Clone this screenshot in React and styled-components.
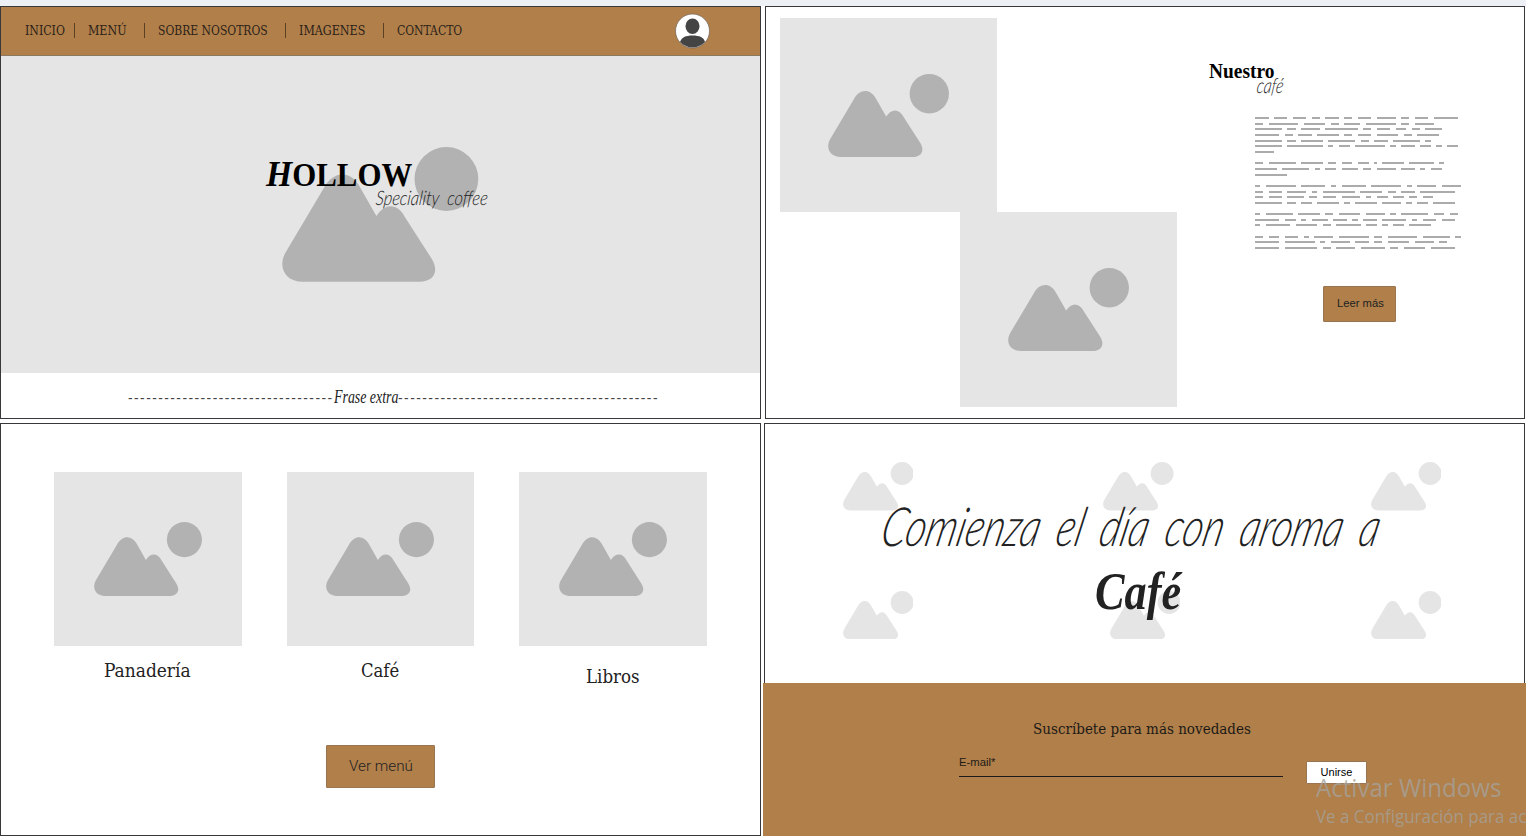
import React, { useLayoutEffect, useRef } from "react";
import styled, { createGlobalStyle } from "styled-components";

const BROWN = "#b07f4a";
const SLAB = '"DejaVu Serif Condensed", "DejaVu Serif", serif';
const SERIF = '"Liberation Serif", serif';
const SANS = '"Liberation Sans", sans-serif';
const HAND = 'Lato, sans-serif';

const GlobalStyle = createGlobalStyle`
  * { box-sizing: border-box; }
  body { margin: 0; background: #fff; overflow: hidden; }
  h1, h2, p { margin: 0; font-weight: inherit; }
`;

const Board = styled.main`
  width: 1526px;
  height: 837px;
  overflow: hidden;
  position: relative;
  display: flex;
  flex-direction: column;
  gap: 4px;
  border-top: 6px solid #edf1f6;
`;
const BoardRow = styled.div`
  display: flex;
  gap: ${(p) => p.$gap}px;
  height: 413px;
`;
const Frame = styled.section`
  position: relative;
  flex: none;
  width: ${(p) => p.$w || 761}px;
  height: 413px;
  border: 1px solid #38383a;
  background: #fff;
  display: flex;
  flex-direction: column;
`;

/* A single line of text condensed or widened to a set measure. */
const Measure = styled.span`
  display: block;
  flex: none;
  width: ${(p) => p.$w}px;
  height: ${(p) => p.$lh}px;
  line-height: ${(p) => p.$lh}px;
  white-space: nowrap;
`;
const Glyphs = styled.span`
  display: inline-block;
  transform-origin: 0 50%;
`;
function Fit({ w, lh, slant = 0, children }) {
  const ref = useRef(null);
  useLayoutEffect(() => {
    const el = ref.current;
    el.style.transform = `skewX(${-slant}deg) scaleX(${w / el.offsetWidth})`;
  }, [w, slant, children]);
  return (
    <Measure $w={w} $lh={lh}>
      <Glyphs ref={ref}>{children}</Glyphs>
    </Measure>
  );
}

const PictureSvg = styled.svg`
  display: block;
  flex: none;
  width: ${(p) => p.$w}px;
  height: ${(p) => p.$w * 0.6875}px;
  fill: ${(p) => p.$fill || "#b2b2b2"};
  margin-left: ${(p) => p.$ml || 0}px;
`;
const Picture = ({ w, fill, ml }) => (
  <PictureSvg $w={w} $fill={fill} $ml={ml} viewBox="0 0 196.4 135">
    <path d="M3.4 105.7 L41.7 41.3 C51 23.2 69 23.2 77.7 39.7 L94.4 69 C103 55.5 116 56 122.7 69.7 L149.4 111.3 C158 125 151 134.7 137.7 134.7 H21 C2 134.7 -4 119 3.4 105.7 Z" />
    <circle cx="164.4" cy="32" r="31.9" />
  </PictureSvg>
);

/* Header and hero */
const NavBar = styled.nav`
  height: 49px;
  flex: none;
  display: flex;
  align-items: center;
  padding-left: 24px;
  background: ${BROWN};
  border-bottom: 1px solid #8d7860;
  font: 12px ${SLAB};
  color: #2b2118;
`;
const Divider = styled.i`
  width: 1px;
  height: 15px;
  background: #5c4023;
  margin: 0 13px 2px ${(p) => p.$ml}px;
`;
const Avatar = styled.svg`
  width: 36px;
  height: 36px;
  margin: 0 0 1px 212.5px;
`;
const Hero = styled.div`
  position: relative;
  height: 317px;
  flex: none;
  background: #e5e5e5;
  padding: 91px 0 0 281.3px;
`;
const Brand = styled.div`
  position: absolute;
  left: 265px;
  top: 97px;
  color: #000;
`;
const BrandName = styled.h1`
  font: bold 33px ${SERIF};
`;
const Initial = styled.span`
  font-size: 36px;
  font-style: italic;
`;
const BrandTag = styled.p`
  margin: -10px 0 0 110px;
  font: italic 300 20px ${HAND};
  word-spacing: 5px;
  color: #222;
`;
const Phrase = styled.div`
  display: flex;
  padding: 12px 0 0 127px;
  color: #444;
`;
const Dashes = styled.span`
  padding-top: 1px;
  font: 14px ${SANS};
  letter-spacing: 1.5px;
`;
const PhraseText = styled.em`
  font: italic 18px ${SERIF};
  color: #222;
`;

/* About */
const AboutFrame = styled(Frame)`
  flex-direction: row;
`;
const Gallery = styled.div`
  width: 397px;
  flex: none;
  padding: 11px 0 0 14px;
`;
const Tile = styled.div`
  width: ${(p) => p.$w}px;
  height: ${(p) => p.$h}px;
  margin-left: ${(p) => p.$ml || 0}px;
  padding: ${(p) => p.$pad};
  background: #e5e5e5;
`;
const About = styled.div`
  padding: 51px 0 0 46px;
`;
const AboutTitle = styled.h2`
  font: bold 20px ${SERIF};
  color: #000;
`;
const AboutSub = styled.p`
  margin: -11px 0 0 48px;
  font: italic 300 21px ${HAND};
  color: #222;
`;
const Copy = styled.div`
  margin: 20px 0 0 46px;
`;
const CopyLine = styled.div`
  height: 5.66px;
  display: flex;
  gap: 5.41px;
`;
const Word = styled.i`
  width: ${(p) => p.$n * 2.707}px;
  height: 2px;
  background: #ababab;
`;
const Button = styled.button`
  display: flex;
  align-items: flex-start;
  justify-content: center;
  padding: ${(p) => p.$pt}px 0 0;
  width: ${(p) => p.$w}px;
  height: ${(p) => p.$h}px;
  margin: ${(p) => p.$m || 0};
  background: ${(p) => p.$bg || BROWN};
  border: 1px solid #987450;
  border-radius: 1px;
  color: ${(p) => p.$color || "#222"};
  font: ${(p) => p.$font};
`;

const copy = [
  [5, 5, 5, 3, 5, 3, 5, 7, 3, 5, 9],
  [3, 11, 8, 3, 6, 11, 3, 7],
  [10, 3, 7, 12, 3, 5, 4, 3, 6],
  [9, 3, 5, 8, 3, 5, 8, 3, 8],
  [10, 3, 8, 10, 3, 5, 10, 2],
  [10, 13, 2, 4, 11, 2, 5, 4, 2, 4],
  [7],
  [],
  [3, 10, 8, 3, 4, 4, 1, 8, 9, 2],
  [8, 10, 2, 4, 6, 3, 7, 5, 2, 4],
  [12],
  [],
  [2, 11, 9, 2, 9, 11, 2, 7, 7],
  [3, 5, 7, 2, 12, 8, 3, 5, 13],
  [3, 5, 6, 3, 5, 7, 2, 4, 4, 3, 4],
  [10, 3, 4, 8, 2, 8, 7, 2, 4, 8],
  [],
  [2, 10, 8, 3, 8, 7, 2, 10, 4, 3],
  [9, 4, 2, 6, 5, 2, 5, 9, 2, 5, 5],
  [2, 9, 8, 3, 9, 4, 2, 4, 8],
  [],
  [3, 4, 5, 2, 7, 11, 3, 11, 10, 2],
  [9, 11, 2, 7, 5, 3, 8, 7, 3],
  [9, 12, 3, 7, 9, 3, 8, 9],
];

/* Menu categories */
const Cards = styled.div`
  display: flex;
  gap: 45px;
  padding: 48px 0 0 53px;
  height: 272px;
`;
const Card = styled.article`
  width: 187.5px;
`;
const CardLabel = styled.p`
  margin: ${(p) => p.$mt}px 0 0 ${(p) => p.$ml}px;
  font: 18.5px ${SLAB};
  color: #222;
`;

/* Call to action and sign-up */
const Pattern = styled.div`
  height: 259px;
  flex: none;
  padding: 38px 0 0 77.6px;
  display: flex;
  flex-direction: column;
  gap: 80px;
`;
const PatternRow = styled.div`
  display: flex;
`;
const Slogan = styled.div`
  position: absolute;
  left: 118px;
  top: 67px;
  color: #222;
`;
const SloganLine = styled.h2`
  font: italic 300 54px ${HAND};
  word-spacing: 9px;
`;
const SloganWord = styled.p`
  margin: -2px 0 0 212px;
  font: italic bold 53px ${SERIF};
`;
const SignUp = styled.footer`
  width: 763px;
  height: 153px;
  flex: none;
  margin-left: -2px;
  padding: 36px 0 0 196px;
  background: ${BROWN};
  color: #1d1a16;
`;
const SignUpTitle = styled.p`
  margin-left: 74px;
  font: 14.5px ${SLAB};
`;
const SignUpRow = styled.div`
  display: flex;
  align-items: flex-start;
  gap: 23px;
  margin-top: 14px;
`;
const Field = styled.label`
  width: 324px;
  height: 24px;
  border-bottom: 1px solid #1b1b1b;
  padding-top: 2px;
  font: 11px ${SANS};
`;
const Watermark = styled.div`
  position: absolute;
  left: 1316px;
  top: 765px;
  color: rgba(166, 162, 155, 0.78);
  font: 25px "Open Sans", sans-serif;
`;
const WatermarkNote = styled.p`
  font-size: 17.5px;
`;

export default function App() {
  return (
    <>
      <GlobalStyle />
      <Board>
        <BoardRow $gap={4}>
          <Frame>
            <NavBar>
              <Fit w={39.5} lh={16}>INICIO</Fit>
              <Divider $ml={9.5} />
              <Fit w={38} lh={16}>MENÚ</Fit>
              <Divider $ml={18} />
              <Fit w={110} lh={16}>SOBRE NOSOTROS</Fit>
              <Divider $ml={17} />
              <Fit w={66} lh={16}>IMAGENES</Fit>
              <Divider $ml={18} />
              <Fit w={65} lh={16}>CONTACTO</Fit>
              <Avatar viewBox="0 0 36 36">
                <circle cx="17.5" cy="18" r="17" fill="#fff" stroke="#6d6257" strokeWidth=".7" />
                <ellipse cx="17.5" cy="13.3" rx="7" ry="7.7" fill="#444" />
                <path d="M5 29 C6.5 24.5 10.5 22.5 17.5 22.5 S29 24.5 30 29 C22.5 36.3 12.5 36.3 5 29Z" fill="#444" />
              </Avatar>
            </NavBar>
            <Hero>
              <Picture w={196.4} />
              <Brand>
                <BrandName><Fit w={146} lh={42}><Initial>H</Initial>OLLOW</Fit></BrandName>
                <BrandTag><Fit w={112} lh={24} slant={6}>Speciality coffee</Fit></BrandTag>
              </Brand>
            </Hero>
            <Phrase>
              <Dashes><Fit w={206} lh={24}>{"-".repeat(34)}</Fit></Dashes>
              <PhraseText><Fit w={64} lh={24}>Frase extra</Fit></PhraseText>
              <Dashes><Fit w={261} lh={24}>{"-".repeat(43)}</Fit></Dashes>
            </Phrase>
          </Frame>

          <AboutFrame $w={760}>
            <Gallery>
              <Tile $w={217} $h={194} $pad="56px 0 0 48px"><Picture w={121} /></Tile>
              <Tile $w={217} $h={195} $ml={180} $pad="56px 0 0 48px"><Picture w={121} /></Tile>
            </Gallery>
            <About>
              <AboutTitle><Fit w={65} lh={26}>Nuestro</Fit></AboutTitle>
              <AboutSub><Fit w={27} lh={24} slant={8}>café</Fit></AboutSub>
              <Copy>
                {copy.map((line, i) => (
                  <CopyLine key={i}>
                    {line.map((n, j) => <Word key={j} $n={n} />)}
                  </CopyLine>
                ))}
              </Copy>
              <Button $w={73} $h={36} $pt={9} $m="33px 0 0 114px" $font={`11px ${SANS}`}>
                <Fit w={47} lh={14}>Leer más</Fit>
              </Button>
            </About>
          </AboutFrame>
        </BoardRow>

        <BoardRow $gap={3}>
          <Frame>
            <Cards>
              <Card>
                <Tile $w={187.5} $h={174} $pad="50px 0 0 40px"><Picture w={108} /></Tile>
                <CardLabel $mt={12} $ml={50}><Fit w={87} lh={26}>Panadería</Fit></CardLabel>
              </Card>
              <Card>
                <Tile $w={187.5} $h={174} $pad="50px 0 0 39.5px"><Picture w={108} /></Tile>
                <CardLabel $mt={12} $ml={74}><Fit w={38.5} lh={26}>Café</Fit></CardLabel>
              </Card>
              <Card>
                <Tile $w={187.5} $h={174} $pad="50px 0 0 40px"><Picture w={108} /></Tile>
                <CardLabel $mt={18} $ml={67}><Fit w={54} lh={26}>Libros</Fit></CardLabel>
              </Card>
            </Cards>
            <Button $w={109} $h={43} $pt={10} $m="49px 0 0 325px" $font={'300 15px Roboto, sans-serif'}>
              <Fit w={64} lh={20}>Ver menú</Fit>
            </Button>
          </Frame>

          <Frame>
            <Pattern>
              <PatternRow>
                <Picture w={70.6} fill="#e5e5e5" />
                <Picture w={70.6} fill="#e5e5e5" ml={189.8} />
                <Picture w={70.6} fill="#e5e5e5" ml={197} />
              </PatternRow>
              <PatternRow>
                <Picture w={70.6} fill="#e5e5e5" />
                <Picture w={70.6} fill="#e5e5e5" ml={196.4} />
                <Picture w={70.6} fill="#e5e5e5" ml={190.4} />
              </PatternRow>
            </Pattern>
            <Slogan>
              <SloganLine><Fit w={498} lh={70} slant={13}>Comienza el día con aroma a</Fit></SloganLine>
              <SloganWord><Fit w={86} lh={64}>Café</Fit></SloganWord>
            </Slogan>
            <SignUp>
              <SignUpTitle><Fit w={217.5} lh={20}>Suscríbete para más novedades</Fit></SignUpTitle>
              <SignUpRow>
                <Field><Fit w={36} lh={14}>E-mail*</Fit></Field>
                <Button $w={61} $h={23} $pt={3} $m="8px 0 0" $bg="#fff" $color="#000" $font={`11px ${SANS}`}>
                  <Fit w={32} lh={14}>Unirse</Fit>
                </Button>
              </SignUpRow>
            </SignUp>
          </Frame>
        </BoardRow>
        <Watermark>
          <Fit w={185} lh={32}>Activar Windows</Fit>
          <WatermarkNote><Fit w={210} lh={26}>Ve a Configuración para ac</Fit></WatermarkNote>
        </Watermark>
      </Board>
    </>
  );
}
